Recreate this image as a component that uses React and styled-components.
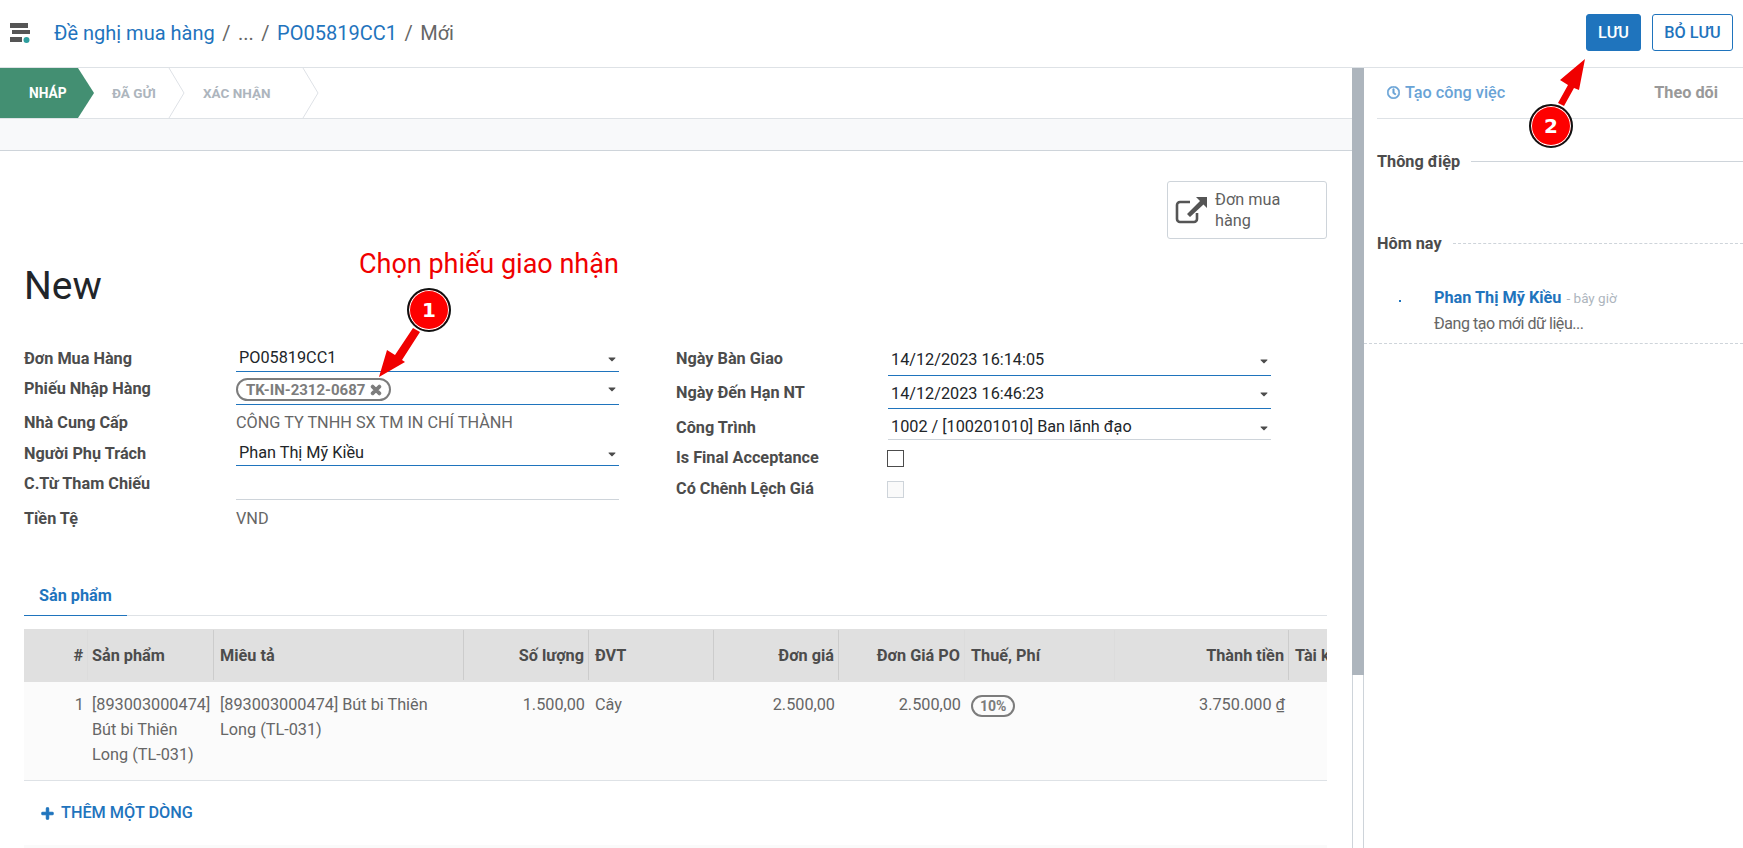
import React from "react";
import styled, { createGlobalStyle } from "styled-components";
import { FaRegClock, FaTimes, FaPlus, FaCaretDown } from "react-icons/fa";

const GlobalStyle = createGlobalStyle`
  html, body { margin: 0; padding: 0; background: #fff; }
  body { font-family: Roboto, "Noto Sans", sans-serif; font-size: 16.25px; color: #4c4c4c; }
  * { box-sizing: border-box; }
`;

const Page = styled.div`
  position: relative;
  height: 848px;
  overflow: hidden;
  display: flex;
  flex-direction: column;
`;

/* top bar */
const TopBar = styled.header`
  height: 68px;
  flex: none;
  display: flex;
  align-items: center;
  padding: 0 10px 2px 10px;
  border-bottom: 1px solid #dee2e6;
`;
const Crumbs = styled.div`
  margin-left: 23px;
  font-size: 20px;
  display: flex;
  gap: 7.5px;
  color: #666;
`;
const CrumbLink = styled.span`
  color: #1f74bd;
`;
const TopActions = styled.div`
  margin-left: auto;
  display: flex;
  gap: 11px;
`;
const Btn = styled.button`
  height: 37px;
  padding: 0;
  width: ${(p) => p.$w}px;
  border-radius: 3px;
  border: 1px solid #1f74bd;
  background: ${(p) => (p.$primary ? "#1f74bd" : "#fff")};
  color: ${(p) => (p.$primary ? "#fff" : "#1f74bd")};
  font: 500 16.25px Roboto, sans-serif;
`;

const Body = styled.div`
  flex: 1;
  display: flex;
  min-height: 0;
`;
const FormView = styled.main`
  width: 1352px;
  flex: none;
  overflow: hidden;
`;

/* status bar */
const StatusBar = styled.div`
  height: 51px;
  display: flex;
  align-items: stretch;
  border-bottom: 1px solid #dee2e6;
`;
const ActiveStep = styled.div`
  width: 94px;
  padding-left: 29px;
  display: flex;
  align-items: center;
  background: #438f72;
  color: #fff;
  font-size: 13.75px;
  font-weight: 700;
  clip-path: polygon(0 0, 78px 0, 94px 50%, 78px 100%, 0 100%);
`;
const Step = styled.div`
  position: relative;
  width: ${(p) => p.$w}px;
  padding-left: ${(p) => p.$pad}px;
  display: flex;
  align-items: center;
  color: #adb5bd;
  font-size: 13.5px;
  font-weight: 700;
  svg {
    position: absolute;
    right: 0;
    top: 0;
  }
`;
const SubBar = styled.div`
  height: 32px;
  background: #f8f9fa;
  border-bottom: 1px solid #ced4da;
`;

/* sheet */
const Sheet = styled.div`
  padding: 30px 25px 0 24px;
`;
const ButtonBox = styled.div`
  display: flex;
  justify-content: flex-end;
`;
const StatButton = styled.div`
  width: 160px;
  height: 58px;
  border: 1px solid #ced4da;
  border-radius: 3px;
  display: flex;
  align-items: center;
  padding-left: 7px;
  gap: 7px;
  font-size: 16.25px;
  line-height: 21px;
  color: #5f5f5f;
`;
const Title = styled.h1`
  margin: 24px 0 0 0;
  font-size: 39px;
  font-weight: 400;
  line-height: 47px;
  color: #212529;
`;
const FormGrid = styled.div`
  margin-top: 34px;
  display: grid;
  grid-template-columns: 652px 595px;
`;
const FormRow = styled.div`
  display: grid;
  grid-template-columns: ${(p) => p.$labelW}px ${(p) => p.$fieldW}px;
  height: ${(p) => p.$h}px;
  padding-top: ${(p) => p.$pt || 0}px;
`;
const Label = styled.label`
  display: flex;
  align-items: center;
  padding-bottom: ${(p) => p.$up || 0}px;
  font-size: 16.25px;
  font-weight: 700;
  color: #4c4c4c;
`;
const Field = styled.div`
  display: flex;
  align-items: center;
  justify-content: space-between;
  padding: 0 3px;
  font-size: 16.25px;
  color: #212529;
  border-bottom: 1px solid ${(p) => (p.$active ? "#1f74bd" : "#ced4da")};
`;
const ReadOnly = styled.div`
  display: flex;
  align-items: center;
  font-size: 16.25px;
  color: #666;
`;
const Caret = styled(FaCaretDown)`
  width: 12px;
  height: 12px;
  color: #4c4c4c;
  margin: 2px -2px 0 0;
`;
const Tag = styled.span`
  display: inline-flex;
  align-items: center;
  gap: 4px;
  height: 23px;
  padding: 0 6px 0 8px;
  margin: 3px 0 0 -3px;
  border: 2px solid #7c7c7c;
  border-radius: 12px;
  color: #7c7c7c;
  font-size: 15px;
  font-weight: 700;
  svg { width: 14px; height: 14px; stroke: currentColor; stroke-width: 40; }
`;
const Check = styled.span`
  align-self: center;
  display: block;
  width: 17px;
  height: 17px;
  margin: 2px 0 0 -1px;
  background: ${(p) => (p.$disabled ? "#fafafa" : "#fff")};
  border: 1px solid ${(p) => (p.$disabled ? "#ced4da" : "#4c4c4c")};
`;

/* tabs */
const Tabs = styled.div`
  margin-top: 45px;
  height: 35px;
  border-bottom: 1px solid #dee2e6;
`;
const Tab = styled.div`
  width: 103px;
  height: 35px;
  padding: 2px 0 0 15px;
  line-height: 26px;
  color: #1f74bd;
  font-size: 16.25px;
  font-weight: 700;
  border-bottom: 1px solid #1f74bd;
`;

/* table */
const Table = styled.div`
  margin-top: 13px;
  overflow: hidden;
`;
const TableRow = styled.div`
  display: grid;
  grid-template-columns: 64px 126px 250px 125px 125px 125px 126px 150px 174px 60px;
  width: 1345px;
`;
const HeadRow = styled(TableRow)`
  height: 53px;
  background: #e0e0e0;
  padding: 1px 0 2px;
`;
const BodyRow = styled(TableRow)`
  height: 98px;
  background: #fbfbfb;
`;
const RowRule = styled.div`
  height: 1px;
  background: #dee2e6;
`;
const HeadCell = styled.div`
  display: flex;
  align-items: center;
  justify-content: ${(p) => (p.$right ? "flex-end" : "flex-start")};
  padding: 0 ${(p) => (p.$right ? 4 : 0)}px 0 ${(p) => (p.$right ? 0 : p.$pl || 6)}px;
  font-size: 16.25px;
  font-weight: 700;
  color: #4c4c4c;
  white-space: nowrap;
  border-right: 1px solid ${(p) => (p.$faint ? "#dcdcdc" : "#cccccc")};
`;
const BodyCell = styled.div`
  padding: 10px ${(p) => (p.$right ? 4 : 0)}px 0 ${(p) => (p.$right ? 0 : p.$pl || 6)}px;
  text-align: ${(p) => (p.$right ? "right" : "left")};
  font-size: 16.25px;
  line-height: 25px;
  color: #666;
`;
const RateTag = styled.span`
  display: inline-block;
  padding: 0 7px;
  height: 22px;
  line-height: 19px;
  vertical-align: top;
  margin-top: 3px;
  border: 2px solid #7c7c7c;
  border-radius: 11px;
  color: #7c7c7c;
  font-size: 14px;
  font-weight: 700;
`;
const Currency = styled.span`
  text-decoration: underline;
`;
const AddLine = styled.div`
  margin: 22px 0 0 17px;
  display: flex;
  align-items: center;
  gap: 7px;
  color: #1f74bd;
  font-size: 16.25px;
  font-weight: 500;
  line-height: 20px;
  svg { width: 13px; height: 13px; stroke: currentColor; stroke-width: 40; }
`;
const NextBand = styled.div`
  margin-top: 22px;
  height: 10px;
  background: #fafafa;
`;

/* scroll bar between form and chatter */
const ScrollTrack = styled.div`
  width: 12px;
  flex: none;
  border-left: 1px solid #ced4da;
  border-right: 1px solid #ced4da;
`;
const ScrollThumb = styled.div`
  margin: 0 -1px;
  height: 607px;
  background: #adb5bd;
`;

/* chatter */
const Chatter = styled.aside`
  flex: 1;
  min-width: 0;
`;
const ChatterTop = styled.div`
  height: 51px;
  margin-left: 13px;
  display: flex;
  align-items: center;
  justify-content: space-between;
  padding: 0 25px 2px 10px;
  border-bottom: 1px solid #dee2e6;
`;
const ScheduleLink = styled.span`
  display: inline-flex;
  align-items: center;
  gap: 5px;
  color: #69a3d6;
  font-size: 16.25px;
  font-weight: 500;
  svg { width: 13px; height: 13px; stroke: currentColor; stroke-width: 24; }
`;
const FollowLabel = styled.span`
  color: #999;
  font-size: 16.25px;
  font-weight: 700;
`;
const Divider = styled.div`
  display: flex;
  align-items: center;
  gap: 11px;
  margin: ${(p) => p.$top}px 0 0 13px;
  height: 20px;
  font-size: 16.25px;
  font-weight: 700;
  color: #4c4c4c;
  &::after {
    content: "";
    flex: 1;
    border-top: 1px ${(p) => (p.$dashed ? "dashed" : "solid")} #ced4da;
  }
`;
const Message = styled.div`
  margin-top: 33px;
  padding: 0 0 9px 35px;
  height: 58px;
  display: flex;
  border-bottom: 1px dashed #ced4da;
`;
const MessageDot = styled.span`
  width: 2px;
  height: 2px;
  margin-top: 14px;
  background: #1f74bd;
`;
const MessageBody = styled.div`
  margin-left: 33px;
`;
const Author = styled.div`
  line-height: 24px;
  font-size: 16.25px;
  font-weight: 700;
  color: #1f74bd;
`;
const Ago = styled.span`
  font-size: 13.5px;
  font-weight: 400;
  color: #adb5bd;
  margin-left: 5px;
`;
const MessageText = styled.div`
  margin-top: 3px;
  font-size: 16px;
  letter-spacing: -0.45px;
  line-height: 22px;
  color: #666;
`;

/* red callouts drawn over the page */
const Overlay = styled.svg`
  position: absolute;
  inset: 0;
  pointer-events: none;
`;
const Callout = styled.div`
  position: absolute;
  left: ${(p) => p.$x - 22}px;
  top: ${(p) => p.$y - 22}px;
  width: 44px;
  height: 44px;
  border-radius: 50%;
  background: #fe0000;
  border: 2px solid #111;
  box-shadow: inset 0 0 0 1px #fff;
  color: #fff;
  font: 700 20px/40px "DejaVu Sans", sans-serif;
  text-align: center;
`;
const CalloutText = styled.div`
  position: absolute;
  left: 359px;
  top: 247px;
  color: #f00000;
  font-size: 27px;
  line-height: 34px;
`;

const Chevron = () => (
  <svg width="17" height="50" viewBox="0 0 17 50" fill="none">
    <path d="M1 0 L16 25 L1 50" stroke="#dee2e6" />
  </svg>
);

const AppIcon = () => (
  <svg width="21" height="20" viewBox="0 0 21 20">
    <rect x="0" y="0" width="18" height="5" fill="#555" />
    <rect x="2" y="7" width="18" height="4" fill="#555" />
    <rect x="0" y="14" width="12" height="5" fill="#555" />
    <circle cx="16.5" cy="17" r="3" fill="#2e9e9e" />
  </svg>
);

const OpenIcon = () => (
  <svg width="33" height="28" viewBox="0 0 33 28" fill="none">
    <path
      d="M15 6 H5 a3 3 0 0 0 -3 3 V23 a3 3 0 0 0 3 3 H19 a3 3 0 0 0 3 -3 V17"
      stroke="#555"
      strokeWidth="2.6"
    />
    <path d="M21 1 H32 V12 L28.5 8.5 L15 21 L12 18 L25 5 Z" fill="#555" />
  </svg>
);

const leftRows = [
  { h: 28, label: "Đơn Mua Hàng", value: "PO05819CC1", active: true },
  { h: 33, label: "Phiếu Nhập Hàng", tag: "TK-IN-2312-0687", active: true },
  { h: 34, label: "Nhà Cung Cấp", text: "CÔNG TY TNHH SX TM IN CHÍ THÀNH" },
  { h: 27, pt: 1, label: "Người Phụ Trách", value: "Phan Thị Mỹ Kiều", active: true },
  { h: 34, label: "C.Từ Tham Chiếu", empty: true },
  { h: 36, label: "Tiền Tệ", text: "VND" },
];

const rightRows = [
  { h: 32, up: 4, label: "Ngày Bàn Giao", value: "14/12/2023 16:14:05", active: true },
  { h: 33, pt: 2, up: 3, label: "Ngày Đến Hạn NT", value: "14/12/2023 16:46:23", active: true },
  { h: 31, pt: 5, label: "Công Trình", value: "1002 / [100201010] Ban lãnh đạo" },
  { h: 33, pt: 1, label: "Is Final Acceptance", check: true },
  { h: 31, label: "Có Chênh Lệch Giá", check: true, disabled: true },
];

const renderRow = (row, labelW, fieldW) => (
  <FormRow key={row.label} $h={row.h} $pt={row.pt} $labelW={labelW} $fieldW={fieldW}>
    <Label $up={row.up}>{row.label}</Label>
    {row.text && <ReadOnly>{row.text}</ReadOnly>}
    {row.value && (
      <Field $active={row.active}>
        {row.value}
        <Caret />
      </Field>
    )}
    {row.tag && (
      <Field $active={row.active}>
        <Tag>
          {row.tag}
          <FaTimes />
        </Tag>
        <Caret />
      </Field>
    )}
    {row.empty && <Field />}
    {row.check && <Check $disabled={row.disabled} />}
  </FormRow>
);

const App = () => (
  <Page>
    <GlobalStyle />
    <TopBar>
      <AppIcon />
      <Crumbs>
        <CrumbLink>Đề nghị mua hàng</CrumbLink>
        <span>/</span>
        <span>...</span>
        <span>/</span>
        <CrumbLink>PO05819CC1</CrumbLink>
        <span>/</span>
        <span>Mới</span>
      </Crumbs>
      <TopActions>
        <Btn $primary $w={55}>LƯU</Btn>
        <Btn $w={81}>BỎ LƯU</Btn>
      </TopActions>
    </TopBar>

    <Body>
      <FormView>
        <StatusBar>
          <ActiveStep>NHÁP</ActiveStep>
          <Step $w={91} $pad={18}>
            ĐÃ GỬI
            <Chevron />
          </Step>
          <Step $w={134} $pad={18}>
            XÁC NHẬN
            <Chevron />
          </Step>
        </StatusBar>
        <SubBar />
        <Sheet>
          <ButtonBox>
            <StatButton>
              <OpenIcon />
              <span>
                Đơn mua
                <br />
                hàng
              </span>
            </StatButton>
          </ButtonBox>
          <Title>New</Title>
          <FormGrid>
            <div>{leftRows.map((r) => renderRow(r, 212, 383))}</div>
            <div>{rightRows.map((r) => renderRow(r, 212, 383))}</div>
          </FormGrid>
          <Tabs>
            <Tab>Sản phẩm</Tab>
          </Tabs>
          <Table>
            <HeadRow>
              <HeadCell $right $faint>#</HeadCell>
              <HeadCell $pl={4}>Sản phẩm</HeadCell>
              <HeadCell>Miêu tả</HeadCell>
              <HeadCell $right>Số lượng</HeadCell>
              <HeadCell>ĐVT</HeadCell>
              <HeadCell $right>Đơn giá</HeadCell>
              <HeadCell $right $faint>Đơn Giá PO</HeadCell>
              <HeadCell $faint>Thuế, Phí</HeadCell>
              <HeadCell $right>Thành tiền</HeadCell>
              <HeadCell>Tài khoản</HeadCell>
            </HeadRow>
            <BodyRow>
              <BodyCell $right>1</BodyCell>
              <BodyCell $pl={4}>[893003000474] Bút bi Thiên Long (TL-031)</BodyCell>
              <BodyCell>[893003000474] Bút bi Thiên Long (TL-031)</BodyCell>
              <BodyCell $right>1.500,00</BodyCell>
              <BodyCell>Cây</BodyCell>
              <BodyCell $right>2.500,00</BodyCell>
              <BodyCell $right>2.500,00</BodyCell>
              <BodyCell><RateTag>10%</RateTag></BodyCell>
              <BodyCell $right>3.750.000 <Currency>₫</Currency></BodyCell>
              <BodyCell />
            </BodyRow>
            <RowRule />
          </Table>
          <AddLine>
            <FaPlus />
            THÊM MỘT DÒNG
          </AddLine>
          <NextBand />
        </Sheet>
      </FormView>

      <ScrollTrack>
        <ScrollThumb />
      </ScrollTrack>

      <Chatter>
        <ChatterTop>
          <ScheduleLink>
            <FaRegClock />
            Tạo công việc
          </ScheduleLink>
          <FollowLabel>Theo dõi</FollowLabel>
        </ChatterTop>
        <Divider $top={32}>Thông điệp</Divider>
        <Divider $top={62} $dashed>Hôm nay</Divider>
        <Message>
          <MessageDot />
          <MessageBody>
            <Author>
              Phan Thị Mỹ Kiều
              <Ago>- bây giờ</Ago>
            </Author>
            <MessageText>Đang tạo mới dữ liệu...</MessageText>
          </MessageBody>
        </Message>
      </Chatter>
    </Body>

    <Overlay width="1743" height="848" viewBox="0 0 1743 848">
      <polygon fill="#f00000" points="379,377 387,350 395,355 413,328 420,332 402,360 405,362" />
      <polygon fill="#f00000" points="1585,59 1560,80 1568,85 1558,103 1564,106 1574,88 1579,90" />
    </Overlay>
    <CalloutText>Chọn phiếu giao nhận</CalloutText>
    <Callout $x={429} $y={310}>1</Callout>
    <Callout $x={1551} $y={126}>2</Callout>
  </Page>
);

export default App;
